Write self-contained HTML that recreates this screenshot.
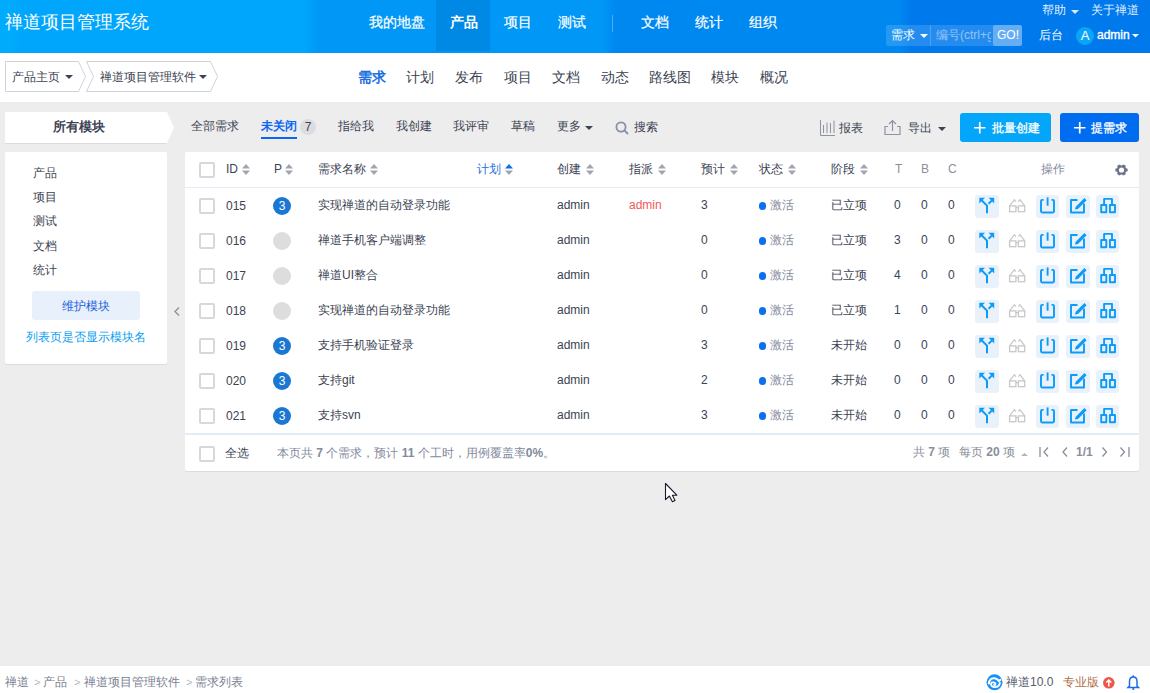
<!DOCTYPE html>
<html><head><meta charset="utf-8">
<style>
*{box-sizing:border-box;margin:0;padding:0}
html,body{width:1150px;height:693px;overflow:hidden}
body{background:#ededed;font-family:"Liberation Sans",sans-serif;font-size:12px;color:#3c4353;position:relative}
.a{position:absolute;white-space:nowrap}
svg{position:absolute;overflow:visible}
#hd{position:absolute;left:0;top:0;width:1150px;height:53px;background:linear-gradient(to right,#00abfc 0px,#00abfc 9px,#00a6fb 21px,#00a6fb 305px,#0097f6 318px,#0097f6 603px,#0088f1 615px,#0088f1 899px,#0079ed 912px,#0079ed 1150px)}
.w{color:#fff}
.cb{position:absolute;width:16px;height:16px;border:2px solid #d7d8db;border-radius:2px;background:#fff}
.pri{position:absolute;width:18px;height:18px;border-radius:50%;background:#1a78d2;color:#fff;text-align:center;line-height:18px;font-size:12px}
.pri.e{background:#dddddd}
.dot{position:absolute;width:7px;height:8px;border-radius:3.5px;background:#0b6ff0}
.ib{position:absolute;width:24px;height:23px;border-radius:3px;background:#e9f2fb}
</style></head><body>

<div id="hd"></div>
<div class="a" style="left:5px;top:11px;line-height:22px;font-size:18px;color:#fff">禅道项目管理系统</div>
<div class="a" style="left:436px;top:0;width:54px;height:51px;background:#0089e4"></div>
<div class="a" style="left:369px;top:14px;line-height:16px;font-size:14px;color:#fff;-webkit-text-stroke:0.2px #fff">我的地盘</div>
<div class="a" style="left:450px;top:14px;line-height:16px;font-size:14px;color:#fff;font-weight:bold">产品</div>
<div class="a" style="left:504px;top:14px;line-height:16px;font-size:14px;color:#fff;-webkit-text-stroke:0.2px #fff">项目</div>
<div class="a" style="left:558px;top:14px;line-height:16px;font-size:14px;color:#fff;-webkit-text-stroke:0.2px #fff">测试</div>
<div class="a" style="left:641px;top:14px;line-height:16px;font-size:14px;color:#fff;-webkit-text-stroke:0.2px #fff">文档</div>
<div class="a" style="left:695px;top:14px;line-height:16px;font-size:14px;color:#fff;-webkit-text-stroke:0.2px #fff">统计</div>
<div class="a" style="left:749px;top:14px;line-height:16px;font-size:14px;color:#fff;-webkit-text-stroke:0.2px #fff">组织</div>
<div class="a" style="left:612px;top:15px;width:1px;height:17px;background:rgba(255,255,255,0.3)"></div>
<div class="a" style="left:1042px;top:3px;line-height:14px;color:rgba(255,255,255,0.9)">帮助</div>
<svg style="left:1071px;top:10px" width="8" height="4"><path d="M0 0H8L4 4Z" fill="rgba(255,255,255,0.85)"/></svg>
<div class="a" style="left:1091px;top:3px;line-height:14px;color:rgba(255,255,255,0.9)">关于禅道</div>
<div class="a" style="left:886px;top:25px;width:136px;height:21px;background:rgba(255,255,255,0.14);border-radius:2px"></div>
<div class="a" style="left:891px;top:28px;line-height:14px;color:#fff">需求</div>
<svg style="left:920px;top:34px" width="8" height="4"><path d="M0 0H8L4 4Z" fill="#fff"/></svg>
<div class="a" style="left:930px;top:25px;width:1px;height:21px;background:rgba(255,255,255,0.2)"></div>
<div class="a" style="left:936px;top:28px;line-height:14px;color:rgba(255,255,255,0.5);width:55px;overflow:hidden">编号(ctrl+g)</div>
<div class="a" style="left:993px;top:25px;width:29px;height:21px;background:rgba(255,255,255,0.3);border-radius:2px"></div>
<div class="a" style="left:997px;top:28px;line-height:14px;color:#fff;font-size:12px">GO!</div>
<div class="a" style="left:1039px;top:28px;line-height:14px;color:#fff">后台</div>
<div class="a" style="left:1076px;top:27px;width:18px;height:18px;border-radius:50%;background:#0aa5f8;color:#fff;font-size:13px;line-height:18px;text-align:center">A</div>
<div class="a" style="left:1097px;top:28px;line-height:14px;color:#fff;-webkit-text-stroke:0.35px #fff">admin</div>
<svg style="left:1132px;top:34px" width="7" height="4"><path d="M0 0H7L3.5 3.5Z" fill="#fff"/></svg>
<div class="a" style="left:0;top:53px;width:1150px;height:49px;background:#fff"></div>
<svg style="left:0;top:0" width="1150" height="100"><path d="M5.5 61.5H78.5L85.5 76.5L78.5 91.5H5.5Z" fill="#fff" stroke="#cdd2dc"/><path d="M86.5 61.5H210.5L217.5 76.5L210.5 91.5H86.5L93.5 76.5Z" fill="#fff" stroke="#cdd2dc"/><path d="M65 75H73L69 79Z" fill="#3c4353"/><path d="M199 75H207L203 79Z" fill="#3c4353"/></svg>
<div class="a" style="left:12px;top:69px;line-height:16px;">产品主页</div>
<div class="a" style="left:100px;top:69px;line-height:16px;">禅道项目管理软件</div>
<div class="a" style="left:358px;top:69px;line-height:16px;font-size:14px;font-weight:bold;color:#1b6fe0">需求</div>
<div class="a" style="left:406px;top:69px;line-height:16px;font-size:14px">计划</div>
<div class="a" style="left:455px;top:69px;line-height:16px;font-size:14px">发布</div>
<div class="a" style="left:504px;top:69px;line-height:16px;font-size:14px">项目</div>
<div class="a" style="left:552px;top:69px;line-height:16px;font-size:14px">文档</div>
<div class="a" style="left:601px;top:69px;line-height:16px;font-size:14px">动态</div>
<div class="a" style="left:649px;top:69px;line-height:16px;font-size:14px">路线图</div>
<div class="a" style="left:711px;top:69px;line-height:16px;font-size:14px">模块</div>
<div class="a" style="left:760px;top:69px;line-height:16px;font-size:14px">概况</div>
<svg style="left:0;top:0" width="200" height="400"><path d="M5 112H167L174 127.5L167 143H5Z" fill="#fff"/><path d="M5 143.5H166" stroke="#dcdcdc" stroke-width="1"/></svg>
<div class="a" style="left:53px;top:119px;line-height:16px;font-weight:bold;font-size:12.5px">所有模块</div>
<div class="a" style="left:5px;top:152px;width:162px;height:212px;background:#fff;border-radius:2px;box-shadow:0 1px 0 #dcdcdc"></div>
<div class="a" style="left:33px;top:165px;line-height:16px;">产品</div>
<div class="a" style="left:33px;top:189px;line-height:16px;">项目</div>
<div class="a" style="left:33px;top:213px;line-height:16px;">测试</div>
<div class="a" style="left:33px;top:238px;line-height:16px;">文档</div>
<div class="a" style="left:33px;top:262px;line-height:16px;">统计</div>
<div class="a" style="left:32px;top:291px;width:108px;height:29px;background:#e8f1fb;border-radius:3px"></div>
<div class="a" style="left:62px;top:298px;line-height:16px;color:#1a5fe0">维护模块</div>
<div class="a" style="left:26px;top:329px;line-height:16px;color:#0aa0ef">列表页是否显示模块名</div>
<svg style="left:174px;top:307px" width="6" height="9"><path d="M5 0.5L1 4.5L5 8.5" fill="none" stroke="#8a8f99" stroke-width="1.3"/></svg>
<div class="a" style="left:191px;top:118px;line-height:16px;">全部需求</div>
<div class="a" style="left:261px;top:118px;line-height:16px;color:#0b66f5;font-weight:bold">未关闭</div>
<div class="a" style="left:261px;top:137px;width:36px;height:2px;background:#0b66f5"></div>
<div class="a" style="left:300px;top:119px;width:16px;height:16px;border-radius:50%;background:#dcdde0;text-align:center;line-height:16px;color:#3c4353">7</div>
<div class="a" style="left:338px;top:118px;line-height:16px;">指给我</div>
<div class="a" style="left:396px;top:118px;line-height:16px;">我创建</div>
<div class="a" style="left:453px;top:118px;line-height:16px;">我评审</div>
<div class="a" style="left:511px;top:118px;line-height:16px;">草稿</div>
<div class="a" style="left:557px;top:118px;line-height:16px;">更多</div>
<svg style="left:585px;top:126px" width="8" height="4"><path d="M0 0H8L4 4Z" fill="#3c4353"/></svg>
<svg style="left:615px;top:121px" width="16" height="16"><circle cx="6" cy="6" r="4.6" fill="none" stroke="#8590a6" stroke-width="1.8"/><path d="M9.4 9.4L13 13" stroke="#8590a6" stroke-width="1.8"/></svg>
<div class="a" style="left:634px;top:119px;line-height:16px;">搜索</div>
<svg style="left:819px;top:120px" width="18" height="17"><g fill="none" stroke="#8d93a3" stroke-width="1"><path d="M1.5 0V15.5H16"/><path d="M4.5 5V13M8 2.5V13M11.5 3V13M15 0.5V13"/></g></svg>
<div class="a" style="left:839px;top:120px;line-height:16px;">报表</div>
<svg style="left:884px;top:119px" width="18" height="18"><g fill="none" stroke="#8d93a3" stroke-width="1.2"><path d="M4 7.5H1V15.5H16V7.5H13"/><path d="M8.5 12V1.5M5 5L8.5 1.5L12 5"/></g></svg>
<div class="a" style="left:908px;top:120px;line-height:16px;">导出</div>
<svg style="left:938px;top:127px" width="8" height="4"><path d="M0 0H8L4 4Z" fill="#3c4353"/></svg>
<div class="a" style="left:960px;top:113px;width:91px;height:29px;background:#03a6f8;border-radius:3px"></div>
<svg style="left:974px;top:122px" width="12" height="12"><path d="M5.75 0V11.5M0 5.75H11.5" stroke="#fff" stroke-width="1.7"/></svg>
<div class="a" style="left:992px;top:120px;line-height:16px;color:#fff;-webkit-text-stroke:0.3px #fff">批量创建</div>
<div class="a" style="left:1060px;top:113px;width:79px;height:29px;background:#006cf0;border-radius:3px"></div>
<svg style="left:1074px;top:122px" width="12" height="12"><path d="M5.75 0V11.5M0 5.75H11.5" stroke="#fff" stroke-width="1.7"/></svg>
<div class="a" style="left:1091px;top:120px;line-height:16px;color:#fff;-webkit-text-stroke:0.3px #fff">提需求</div>
<div class="a" style="left:185px;top:152px;width:954px;height:319px;background:#fff;border-radius:2px;box-shadow:0 1px 0 #dcdcdc"></div>
<div class="cb" style="left:199px;top:162px"></div>
<div class="a" style="left:226px;top:161px;line-height:16px;">ID</div>
<svg style="left:242px;top:164px" width="8" height="11"><path d="M0 4.5L4 0L8 4.5Z" fill="#a0a5b0"/><path d="M0 6.5H8L4 11Z" fill="#a0a5b0"/></svg>
<div class="a" style="left:274px;top:161px;line-height:16px;">P</div>
<svg style="left:285px;top:164px" width="8" height="11"><path d="M0 4.5L4 0L8 4.5Z" fill="#a0a5b0"/><path d="M0 6.5H8L4 11Z" fill="#a0a5b0"/></svg>
<div class="a" style="left:318px;top:161px;line-height:16px;">需求名称</div>
<svg style="left:370px;top:164px" width="8" height="11"><path d="M0 4.5L4 0L8 4.5Z" fill="#a0a5b0"/><path d="M0 6.5H8L4 11Z" fill="#a0a5b0"/></svg>
<div class="a" style="left:477px;top:161px;line-height:16px;color:#1b6fe0">计划</div>
<svg style="left:505px;top:164px" width="8" height="11"><path d="M0 4.5L4 0L8 4.5Z" fill="#0b6ff0"/><path d="M0 6.5H8L4 11Z" fill="#a0a5b0"/></svg>
<div class="a" style="left:557px;top:161px;line-height:16px;">创建</div>
<svg style="left:586px;top:164px" width="8" height="11"><path d="M0 4.5L4 0L8 4.5Z" fill="#a0a5b0"/><path d="M0 6.5H8L4 11Z" fill="#a0a5b0"/></svg>
<div class="a" style="left:629px;top:161px;line-height:16px;">指派</div>
<svg style="left:658px;top:164px" width="8" height="11"><path d="M0 4.5L4 0L8 4.5Z" fill="#a0a5b0"/><path d="M0 6.5H8L4 11Z" fill="#a0a5b0"/></svg>
<div class="a" style="left:701px;top:161px;line-height:16px;">预计</div>
<svg style="left:730px;top:164px" width="8" height="11"><path d="M0 4.5L4 0L8 4.5Z" fill="#a0a5b0"/><path d="M0 6.5H8L4 11Z" fill="#a0a5b0"/></svg>
<div class="a" style="left:759px;top:161px;line-height:16px;">状态</div>
<svg style="left:788px;top:164px" width="8" height="11"><path d="M0 4.5L4 0L8 4.5Z" fill="#a0a5b0"/><path d="M0 6.5H8L4 11Z" fill="#a0a5b0"/></svg>
<div class="a" style="left:831px;top:161px;line-height:16px;">阶段</div>
<svg style="left:860px;top:164px" width="8" height="11"><path d="M0 4.5L4 0L8 4.5Z" fill="#a0a5b0"/><path d="M0 6.5H8L4 11Z" fill="#a0a5b0"/></svg>
<div class="a" style="left:895px;top:161px;line-height:16px;color:#8b909b">T</div>
<div class="a" style="left:921px;top:161px;line-height:16px;color:#8b909b">B</div>
<div class="a" style="left:948px;top:161px;line-height:16px;color:#8b909b">C</div>
<div class="a" style="left:1041px;top:161px;line-height:16px;color:#838a9d">操作</div>
<svg style="left:1115px;top:164px" width="14" height="13"><path d="M10.98 4.21L12.64 4.72L12.64 7.28L10.98 7.79L10.46 8.59L10.80 10.15L8.34 11.42L7.01 10.39L5.99 10.39L4.66 11.42L2.20 10.15L2.54 8.59L2.02 7.79L0.36 7.28L0.36 4.72L2.02 4.21L2.54 3.41L2.20 1.85L4.66 0.58L5.99 1.61L7.01 1.61L8.34 0.58L10.80 1.85L10.46 3.41Z" fill="#6c7386"/><circle cx="6.5" cy="6" r="2.6" fill="#fff"/></svg>
<div class="a" style="left:185px;top:187px;width:954px;height:1px;background:#e3edf8"></div>
<div class="cb" style="left:199px;top:198px"></div>
<div class="a" style="left:226px;top:198px;line-height:16px;">015</div>
<div class="pri" style="left:273px;top:197px">3</div>
<div class="a" style="left:318px;top:197px;line-height:16px;">实现禅道的自动登录功能</div>
<div class="a" style="left:557px;top:197px;line-height:16px;">admin</div>
<div class="a" style="left:629px;top:197px;line-height:16px;color:#f1575b">admin</div>
<div class="a" style="left:701px;top:197px;line-height:16px;">3</div>
<div class="dot" style="left:759px;top:202px"></div>
<div class="a" style="left:770px;top:197px;line-height:16px;color:#838a9d">激活</div>
<div class="a" style="left:831px;top:197px;line-height:16px;">已立项</div>
<div class="a" style="left:894px;top:197px;line-height:16px;">0</div>
<div class="a" style="left:921px;top:197px;line-height:16px;">0</div>
<div class="a" style="left:948px;top:197px;line-height:16px;">0</div>
<div class="ib" style="left:975px;top:195px;width:24px"></div>
<div class="ib" style="left:1036px;top:195px;width:23px"></div>
<div class="ib" style="left:1066px;top:195px;width:24px"></div>
<div class="ib" style="left:1096px;top:195px;width:23px"></div>
<svg style="left:975px;top:195px" width="24" height="23"><g stroke="#0d9bf7" stroke-width="2" fill="none" stroke-linecap="butt"><path d="M12 18.2V10.6L6.6 5.2"/><path d="M13.6 8.8L17 5.4"/></g><path d="M4.3 2.7H10L4.3 8.4Z" fill="#0d9bf7"/><path d="M19.2 2.7H13.5L19.2 8.4Z" fill="#0d9bf7"/></svg>
<svg style="left:1005px;top:195px" width="24" height="23"><g stroke="#c8c8c8" stroke-width="1.3" fill="none"><rect x="4.6" y="10.9" width="6.3" height="5.8" /><rect x="13.4" y="10.9" width="6.3" height="5.8"/><path d="M10.9 12.6H13.4"/><path d="M4.6 10.9L9.3 4.7L10.9 6.7M19.7 10.9L15 4.7L13.4 6.7"/></g></svg>
<svg style="left:1036px;top:195px" width="23" height="23"><g stroke="#0d9bf7" stroke-width="1.9" fill="none" stroke-linejoin="round"><path d="M7.6 4.9H6.2Q5 4.9 5 6.1V16.3Q5 17.5 6.2 17.5H16.8Q18 17.5 18 16.3V6.1Q18 4.9 16.8 4.9H15.5"/><path d="M11.6 2.4V10.7"/></g></svg>
<svg style="left:1066px;top:195px" width="24" height="23"><g stroke="#0d9bf7" stroke-width="1.9" fill="none" stroke-linejoin="round"><path d="M11.5 5H5V17.5H18V8.6"/></g><path d="M8.8 14.6L9.8 11.8L18.4 3.1L20.6 5.3L12 13.9Z" fill="#0d9bf7"/></svg>
<svg style="left:1096px;top:195px" width="24" height="23"><g stroke="#0d9bf7" stroke-width="1.9" fill="none" stroke-linejoin="round"><path d="M8.1 10V3.9H16V10"/><rect x="5.2" y="10" width="5.1" height="7.2"/><rect x="13.9" y="10" width="5.1" height="7.2"/></g></svg>
<div class="cb" style="left:199px;top:233px"></div>
<div class="a" style="left:226px;top:233px;line-height:16px;">016</div>
<div class="pri e" style="left:273px;top:232px"></div>
<div class="a" style="left:318px;top:232px;line-height:16px;">禅道手机客户端调整</div>
<div class="a" style="left:557px;top:232px;line-height:16px;">admin</div>
<div class="a" style="left:701px;top:232px;line-height:16px;">0</div>
<div class="dot" style="left:759px;top:237px"></div>
<div class="a" style="left:770px;top:232px;line-height:16px;color:#838a9d">激活</div>
<div class="a" style="left:831px;top:232px;line-height:16px;">已立项</div>
<div class="a" style="left:894px;top:232px;line-height:16px;">3</div>
<div class="a" style="left:921px;top:232px;line-height:16px;">0</div>
<div class="a" style="left:948px;top:232px;line-height:16px;">0</div>
<div class="ib" style="left:975px;top:230px;width:24px"></div>
<div class="ib" style="left:1036px;top:230px;width:23px"></div>
<div class="ib" style="left:1066px;top:230px;width:24px"></div>
<div class="ib" style="left:1096px;top:230px;width:23px"></div>
<svg style="left:975px;top:230px" width="24" height="23"><g stroke="#0d9bf7" stroke-width="2" fill="none" stroke-linecap="butt"><path d="M12 18.2V10.6L6.6 5.2"/><path d="M13.6 8.8L17 5.4"/></g><path d="M4.3 2.7H10L4.3 8.4Z" fill="#0d9bf7"/><path d="M19.2 2.7H13.5L19.2 8.4Z" fill="#0d9bf7"/></svg>
<svg style="left:1005px;top:230px" width="24" height="23"><g stroke="#c8c8c8" stroke-width="1.3" fill="none"><rect x="4.6" y="10.9" width="6.3" height="5.8" /><rect x="13.4" y="10.9" width="6.3" height="5.8"/><path d="M10.9 12.6H13.4"/><path d="M4.6 10.9L9.3 4.7L10.9 6.7M19.7 10.9L15 4.7L13.4 6.7"/></g></svg>
<svg style="left:1036px;top:230px" width="23" height="23"><g stroke="#0d9bf7" stroke-width="1.9" fill="none" stroke-linejoin="round"><path d="M7.6 4.9H6.2Q5 4.9 5 6.1V16.3Q5 17.5 6.2 17.5H16.8Q18 17.5 18 16.3V6.1Q18 4.9 16.8 4.9H15.5"/><path d="M11.6 2.4V10.7"/></g></svg>
<svg style="left:1066px;top:230px" width="24" height="23"><g stroke="#0d9bf7" stroke-width="1.9" fill="none" stroke-linejoin="round"><path d="M11.5 5H5V17.5H18V8.6"/></g><path d="M8.8 14.6L9.8 11.8L18.4 3.1L20.6 5.3L12 13.9Z" fill="#0d9bf7"/></svg>
<svg style="left:1096px;top:230px" width="24" height="23"><g stroke="#0d9bf7" stroke-width="1.9" fill="none" stroke-linejoin="round"><path d="M8.1 10V3.9H16V10"/><rect x="5.2" y="10" width="5.1" height="7.2"/><rect x="13.9" y="10" width="5.1" height="7.2"/></g></svg>
<div class="cb" style="left:199px;top:268px"></div>
<div class="a" style="left:226px;top:268px;line-height:16px;">017</div>
<div class="pri e" style="left:273px;top:267px"></div>
<div class="a" style="left:318px;top:267px;line-height:16px;">禅道UI整合</div>
<div class="a" style="left:557px;top:267px;line-height:16px;">admin</div>
<div class="a" style="left:701px;top:267px;line-height:16px;">0</div>
<div class="dot" style="left:759px;top:272px"></div>
<div class="a" style="left:770px;top:267px;line-height:16px;color:#838a9d">激活</div>
<div class="a" style="left:831px;top:267px;line-height:16px;">已立项</div>
<div class="a" style="left:894px;top:267px;line-height:16px;">4</div>
<div class="a" style="left:921px;top:267px;line-height:16px;">0</div>
<div class="a" style="left:948px;top:267px;line-height:16px;">0</div>
<div class="ib" style="left:975px;top:265px;width:24px"></div>
<div class="ib" style="left:1036px;top:265px;width:23px"></div>
<div class="ib" style="left:1066px;top:265px;width:24px"></div>
<div class="ib" style="left:1096px;top:265px;width:23px"></div>
<svg style="left:975px;top:265px" width="24" height="23"><g stroke="#0d9bf7" stroke-width="2" fill="none" stroke-linecap="butt"><path d="M12 18.2V10.6L6.6 5.2"/><path d="M13.6 8.8L17 5.4"/></g><path d="M4.3 2.7H10L4.3 8.4Z" fill="#0d9bf7"/><path d="M19.2 2.7H13.5L19.2 8.4Z" fill="#0d9bf7"/></svg>
<svg style="left:1005px;top:265px" width="24" height="23"><g stroke="#c8c8c8" stroke-width="1.3" fill="none"><rect x="4.6" y="10.9" width="6.3" height="5.8" /><rect x="13.4" y="10.9" width="6.3" height="5.8"/><path d="M10.9 12.6H13.4"/><path d="M4.6 10.9L9.3 4.7L10.9 6.7M19.7 10.9L15 4.7L13.4 6.7"/></g></svg>
<svg style="left:1036px;top:265px" width="23" height="23"><g stroke="#0d9bf7" stroke-width="1.9" fill="none" stroke-linejoin="round"><path d="M7.6 4.9H6.2Q5 4.9 5 6.1V16.3Q5 17.5 6.2 17.5H16.8Q18 17.5 18 16.3V6.1Q18 4.9 16.8 4.9H15.5"/><path d="M11.6 2.4V10.7"/></g></svg>
<svg style="left:1066px;top:265px" width="24" height="23"><g stroke="#0d9bf7" stroke-width="1.9" fill="none" stroke-linejoin="round"><path d="M11.5 5H5V17.5H18V8.6"/></g><path d="M8.8 14.6L9.8 11.8L18.4 3.1L20.6 5.3L12 13.9Z" fill="#0d9bf7"/></svg>
<svg style="left:1096px;top:265px" width="24" height="23"><g stroke="#0d9bf7" stroke-width="1.9" fill="none" stroke-linejoin="round"><path d="M8.1 10V3.9H16V10"/><rect x="5.2" y="10" width="5.1" height="7.2"/><rect x="13.9" y="10" width="5.1" height="7.2"/></g></svg>
<div class="cb" style="left:199px;top:303px"></div>
<div class="a" style="left:226px;top:303px;line-height:16px;">018</div>
<div class="pri e" style="left:273px;top:302px"></div>
<div class="a" style="left:318px;top:302px;line-height:16px;">实现禅道的自动登录功能</div>
<div class="a" style="left:557px;top:302px;line-height:16px;">admin</div>
<div class="a" style="left:701px;top:302px;line-height:16px;">0</div>
<div class="dot" style="left:759px;top:307px"></div>
<div class="a" style="left:770px;top:302px;line-height:16px;color:#838a9d">激活</div>
<div class="a" style="left:831px;top:302px;line-height:16px;">已立项</div>
<div class="a" style="left:894px;top:302px;line-height:16px;">1</div>
<div class="a" style="left:921px;top:302px;line-height:16px;">0</div>
<div class="a" style="left:948px;top:302px;line-height:16px;">0</div>
<div class="ib" style="left:975px;top:300px;width:24px"></div>
<div class="ib" style="left:1036px;top:300px;width:23px"></div>
<div class="ib" style="left:1066px;top:300px;width:24px"></div>
<div class="ib" style="left:1096px;top:300px;width:23px"></div>
<svg style="left:975px;top:300px" width="24" height="23"><g stroke="#0d9bf7" stroke-width="2" fill="none" stroke-linecap="butt"><path d="M12 18.2V10.6L6.6 5.2"/><path d="M13.6 8.8L17 5.4"/></g><path d="M4.3 2.7H10L4.3 8.4Z" fill="#0d9bf7"/><path d="M19.2 2.7H13.5L19.2 8.4Z" fill="#0d9bf7"/></svg>
<svg style="left:1005px;top:300px" width="24" height="23"><g stroke="#c8c8c8" stroke-width="1.3" fill="none"><rect x="4.6" y="10.9" width="6.3" height="5.8" /><rect x="13.4" y="10.9" width="6.3" height="5.8"/><path d="M10.9 12.6H13.4"/><path d="M4.6 10.9L9.3 4.7L10.9 6.7M19.7 10.9L15 4.7L13.4 6.7"/></g></svg>
<svg style="left:1036px;top:300px" width="23" height="23"><g stroke="#0d9bf7" stroke-width="1.9" fill="none" stroke-linejoin="round"><path d="M7.6 4.9H6.2Q5 4.9 5 6.1V16.3Q5 17.5 6.2 17.5H16.8Q18 17.5 18 16.3V6.1Q18 4.9 16.8 4.9H15.5"/><path d="M11.6 2.4V10.7"/></g></svg>
<svg style="left:1066px;top:300px" width="24" height="23"><g stroke="#0d9bf7" stroke-width="1.9" fill="none" stroke-linejoin="round"><path d="M11.5 5H5V17.5H18V8.6"/></g><path d="M8.8 14.6L9.8 11.8L18.4 3.1L20.6 5.3L12 13.9Z" fill="#0d9bf7"/></svg>
<svg style="left:1096px;top:300px" width="24" height="23"><g stroke="#0d9bf7" stroke-width="1.9" fill="none" stroke-linejoin="round"><path d="M8.1 10V3.9H16V10"/><rect x="5.2" y="10" width="5.1" height="7.2"/><rect x="13.9" y="10" width="5.1" height="7.2"/></g></svg>
<div class="cb" style="left:199px;top:338px"></div>
<div class="a" style="left:226px;top:338px;line-height:16px;">019</div>
<div class="pri" style="left:273px;top:337px">3</div>
<div class="a" style="left:318px;top:337px;line-height:16px;">支持手机验证登录</div>
<div class="a" style="left:557px;top:337px;line-height:16px;">admin</div>
<div class="a" style="left:701px;top:337px;line-height:16px;">3</div>
<div class="dot" style="left:759px;top:342px"></div>
<div class="a" style="left:770px;top:337px;line-height:16px;color:#838a9d">激活</div>
<div class="a" style="left:831px;top:337px;line-height:16px;">未开始</div>
<div class="a" style="left:894px;top:337px;line-height:16px;">0</div>
<div class="a" style="left:921px;top:337px;line-height:16px;">0</div>
<div class="a" style="left:948px;top:337px;line-height:16px;">0</div>
<div class="ib" style="left:975px;top:335px;width:24px"></div>
<div class="ib" style="left:1036px;top:335px;width:23px"></div>
<div class="ib" style="left:1066px;top:335px;width:24px"></div>
<div class="ib" style="left:1096px;top:335px;width:23px"></div>
<svg style="left:975px;top:335px" width="24" height="23"><g stroke="#0d9bf7" stroke-width="2" fill="none" stroke-linecap="butt"><path d="M12 18.2V10.6L6.6 5.2"/><path d="M13.6 8.8L17 5.4"/></g><path d="M4.3 2.7H10L4.3 8.4Z" fill="#0d9bf7"/><path d="M19.2 2.7H13.5L19.2 8.4Z" fill="#0d9bf7"/></svg>
<svg style="left:1005px;top:335px" width="24" height="23"><g stroke="#c8c8c8" stroke-width="1.3" fill="none"><rect x="4.6" y="10.9" width="6.3" height="5.8" /><rect x="13.4" y="10.9" width="6.3" height="5.8"/><path d="M10.9 12.6H13.4"/><path d="M4.6 10.9L9.3 4.7L10.9 6.7M19.7 10.9L15 4.7L13.4 6.7"/></g></svg>
<svg style="left:1036px;top:335px" width="23" height="23"><g stroke="#0d9bf7" stroke-width="1.9" fill="none" stroke-linejoin="round"><path d="M7.6 4.9H6.2Q5 4.9 5 6.1V16.3Q5 17.5 6.2 17.5H16.8Q18 17.5 18 16.3V6.1Q18 4.9 16.8 4.9H15.5"/><path d="M11.6 2.4V10.7"/></g></svg>
<svg style="left:1066px;top:335px" width="24" height="23"><g stroke="#0d9bf7" stroke-width="1.9" fill="none" stroke-linejoin="round"><path d="M11.5 5H5V17.5H18V8.6"/></g><path d="M8.8 14.6L9.8 11.8L18.4 3.1L20.6 5.3L12 13.9Z" fill="#0d9bf7"/></svg>
<svg style="left:1096px;top:335px" width="24" height="23"><g stroke="#0d9bf7" stroke-width="1.9" fill="none" stroke-linejoin="round"><path d="M8.1 10V3.9H16V10"/><rect x="5.2" y="10" width="5.1" height="7.2"/><rect x="13.9" y="10" width="5.1" height="7.2"/></g></svg>
<div class="cb" style="left:199px;top:373px"></div>
<div class="a" style="left:226px;top:373px;line-height:16px;">020</div>
<div class="pri" style="left:273px;top:372px">3</div>
<div class="a" style="left:318px;top:372px;line-height:16px;">支持git</div>
<div class="a" style="left:557px;top:372px;line-height:16px;">admin</div>
<div class="a" style="left:701px;top:372px;line-height:16px;">2</div>
<div class="dot" style="left:759px;top:377px"></div>
<div class="a" style="left:770px;top:372px;line-height:16px;color:#838a9d">激活</div>
<div class="a" style="left:831px;top:372px;line-height:16px;">未开始</div>
<div class="a" style="left:894px;top:372px;line-height:16px;">0</div>
<div class="a" style="left:921px;top:372px;line-height:16px;">0</div>
<div class="a" style="left:948px;top:372px;line-height:16px;">0</div>
<div class="ib" style="left:975px;top:370px;width:24px"></div>
<div class="ib" style="left:1036px;top:370px;width:23px"></div>
<div class="ib" style="left:1066px;top:370px;width:24px"></div>
<div class="ib" style="left:1096px;top:370px;width:23px"></div>
<svg style="left:975px;top:370px" width="24" height="23"><g stroke="#0d9bf7" stroke-width="2" fill="none" stroke-linecap="butt"><path d="M12 18.2V10.6L6.6 5.2"/><path d="M13.6 8.8L17 5.4"/></g><path d="M4.3 2.7H10L4.3 8.4Z" fill="#0d9bf7"/><path d="M19.2 2.7H13.5L19.2 8.4Z" fill="#0d9bf7"/></svg>
<svg style="left:1005px;top:370px" width="24" height="23"><g stroke="#c8c8c8" stroke-width="1.3" fill="none"><rect x="4.6" y="10.9" width="6.3" height="5.8" /><rect x="13.4" y="10.9" width="6.3" height="5.8"/><path d="M10.9 12.6H13.4"/><path d="M4.6 10.9L9.3 4.7L10.9 6.7M19.7 10.9L15 4.7L13.4 6.7"/></g></svg>
<svg style="left:1036px;top:370px" width="23" height="23"><g stroke="#0d9bf7" stroke-width="1.9" fill="none" stroke-linejoin="round"><path d="M7.6 4.9H6.2Q5 4.9 5 6.1V16.3Q5 17.5 6.2 17.5H16.8Q18 17.5 18 16.3V6.1Q18 4.9 16.8 4.9H15.5"/><path d="M11.6 2.4V10.7"/></g></svg>
<svg style="left:1066px;top:370px" width="24" height="23"><g stroke="#0d9bf7" stroke-width="1.9" fill="none" stroke-linejoin="round"><path d="M11.5 5H5V17.5H18V8.6"/></g><path d="M8.8 14.6L9.8 11.8L18.4 3.1L20.6 5.3L12 13.9Z" fill="#0d9bf7"/></svg>
<svg style="left:1096px;top:370px" width="24" height="23"><g stroke="#0d9bf7" stroke-width="1.9" fill="none" stroke-linejoin="round"><path d="M8.1 10V3.9H16V10"/><rect x="5.2" y="10" width="5.1" height="7.2"/><rect x="13.9" y="10" width="5.1" height="7.2"/></g></svg>
<div class="cb" style="left:199px;top:408px"></div>
<div class="a" style="left:226px;top:408px;line-height:16px;">021</div>
<div class="pri" style="left:273px;top:407px">3</div>
<div class="a" style="left:318px;top:407px;line-height:16px;">支持svn</div>
<div class="a" style="left:557px;top:407px;line-height:16px;">admin</div>
<div class="a" style="left:701px;top:407px;line-height:16px;">3</div>
<div class="dot" style="left:759px;top:412px"></div>
<div class="a" style="left:770px;top:407px;line-height:16px;color:#838a9d">激活</div>
<div class="a" style="left:831px;top:407px;line-height:16px;">未开始</div>
<div class="a" style="left:894px;top:407px;line-height:16px;">0</div>
<div class="a" style="left:921px;top:407px;line-height:16px;">0</div>
<div class="a" style="left:948px;top:407px;line-height:16px;">0</div>
<div class="ib" style="left:975px;top:405px;width:24px"></div>
<div class="ib" style="left:1036px;top:405px;width:23px"></div>
<div class="ib" style="left:1066px;top:405px;width:24px"></div>
<div class="ib" style="left:1096px;top:405px;width:23px"></div>
<svg style="left:975px;top:405px" width="24" height="23"><g stroke="#0d9bf7" stroke-width="2" fill="none" stroke-linecap="butt"><path d="M12 18.2V10.6L6.6 5.2"/><path d="M13.6 8.8L17 5.4"/></g><path d="M4.3 2.7H10L4.3 8.4Z" fill="#0d9bf7"/><path d="M19.2 2.7H13.5L19.2 8.4Z" fill="#0d9bf7"/></svg>
<svg style="left:1005px;top:405px" width="24" height="23"><g stroke="#c8c8c8" stroke-width="1.3" fill="none"><rect x="4.6" y="10.9" width="6.3" height="5.8" /><rect x="13.4" y="10.9" width="6.3" height="5.8"/><path d="M10.9 12.6H13.4"/><path d="M4.6 10.9L9.3 4.7L10.9 6.7M19.7 10.9L15 4.7L13.4 6.7"/></g></svg>
<svg style="left:1036px;top:405px" width="23" height="23"><g stroke="#0d9bf7" stroke-width="1.9" fill="none" stroke-linejoin="round"><path d="M7.6 4.9H6.2Q5 4.9 5 6.1V16.3Q5 17.5 6.2 17.5H16.8Q18 17.5 18 16.3V6.1Q18 4.9 16.8 4.9H15.5"/><path d="M11.6 2.4V10.7"/></g></svg>
<svg style="left:1066px;top:405px" width="24" height="23"><g stroke="#0d9bf7" stroke-width="1.9" fill="none" stroke-linejoin="round"><path d="M11.5 5H5V17.5H18V8.6"/></g><path d="M8.8 14.6L9.8 11.8L18.4 3.1L20.6 5.3L12 13.9Z" fill="#0d9bf7"/></svg>
<svg style="left:1096px;top:405px" width="24" height="23"><g stroke="#0d9bf7" stroke-width="1.9" fill="none" stroke-linejoin="round"><path d="M8.1 10V3.9H16V10"/><rect x="5.2" y="10" width="5.1" height="7.2"/><rect x="13.9" y="10" width="5.1" height="7.2"/></g></svg>
<div class="a" style="left:185px;top:433px;width:954px;height:2px;background:#e3edf8"></div>
<div class="cb" style="left:199px;top:446px"></div>
<div class="a" style="left:225px;top:445px;line-height:16px;">全选</div>
<div class="a" style="left:277px;top:445px;line-height:16px;color:#838a9d">本页共 <b>7</b> 个需求，预计 <b>11</b> 个工时，用例覆盖率<b>0%</b>。</div>
<div class="a" style="left:913px;top:444px;line-height:16px;color:#8a8f9a">共 <b>7</b> 项</div>
<div class="a" style="left:959px;top:444px;line-height:16px;color:#8a8f9a">每页 <b>20</b> 项</div>
<svg style="left:1021px;top:453px" width="7" height="3"><path d="M0 3H7L3.5 0Z" fill="#b0b4bc"/></svg>
<svg style="left:1039px;top:446px" width="12" height="12"><g stroke="#8a8f9a" stroke-width="1.3" fill="none"><path d="M1 1V11M9 1.5L5 6L9 10.5"/></g></svg>
<svg style="left:1061px;top:446px" width="8" height="12"><g stroke="#8a8f9a" stroke-width="1.3" fill="none"><path d="M6 1.5L2 6L6 10.5"/></g></svg>
<div class="a" style="left:1076px;top:444px;line-height:16px;color:#8a8f9a"><b>1/1</b></div>
<svg style="left:1101px;top:446px" width="8" height="12"><g stroke="#8a8f9a" stroke-width="1.3" fill="none"><path d="M1.5 1.5L5.5 6L1.5 10.5"/></g></svg>
<svg style="left:1119px;top:446px" width="12" height="12"><g stroke="#8a8f9a" stroke-width="1.3" fill="none"><path d="M1.5 1.5L5.5 6L1.5 10.5M10 1V11"/></g></svg>
<div class="a" style="left:0;top:665px;width:1150px;height:28px;background:#fff;border-top:1px solid #e4ecf5"></div>
<div class="a" style="left:5px;top:674px;line-height:16px;color:#7b8191">禅道</div>
<div class="a" style="left:34px;top:674px;line-height:16px;color:#b5b9c0;font-size:11px">&gt;</div>
<div class="a" style="left:43px;top:674px;line-height:16px;color:#7b8191">产品</div>
<div class="a" style="left:74px;top:674px;line-height:16px;color:#b5b9c0;font-size:11px">&gt;</div>
<div class="a" style="left:84px;top:674px;line-height:16px;color:#7b8191">禅道项目管理软件</div>
<div class="a" style="left:186px;top:674px;line-height:16px;color:#b5b9c0;font-size:11px">&gt;</div>
<div class="a" style="left:195px;top:674px;line-height:16px;color:#7b8191">需求列表</div>
<svg style="left:986px;top:674px" width="17" height="17"><circle cx="8.5" cy="8.3" r="8" fill="#1890f5"/><g fill="none" stroke="#fff" stroke-linecap="round"><path d="M2.8 9.5C3.2 6.5 5 4.3 7.5 4.2C9.8 4.1 11.6 5.3 12.8 7L14.4 5.8" stroke-width="2.1"/><path d="M13.9 9C13.5 11.6 11.8 13 9 13.1C6.4 13.2 5 11.8 5 10.1C5 8.7 6.3 8.2 7.6 8.3C9 8.5 9.7 9.5 9.4 10.4C9.2 11 8.6 11.2 8 11" stroke-width="1.8"/></g></svg>
<div class="a" style="left:1006px;top:674px;line-height:16px;color:#555d6e">禅道10.0</div>
<div class="a" style="left:1063px;top:674px;line-height:16px;color:#b0704a">专业版</div>
<svg style="left:1103px;top:677px" width="12" height="12"><circle cx="5.8" cy="5.8" r="5.8" fill="#f0554b"/><path d="M5.8 9.5V3M3.3 5.5L5.8 3L8.3 5.5" fill="none" stroke="#fff" stroke-width="1.5"/></svg>
<svg style="left:1127px;top:675px" width="13" height="15"><path d="M2.5 11V6.5C2.5 3.5 4 2 6.3 2C8.6 2 10 3.5 10 6.5V11L11.5 12.5H1L2.5 11Z" fill="none" stroke="#1a6fe8" stroke-width="1.5"/><circle cx="6.3" cy="1.3" r="1" fill="#1a6fe8"/><circle cx="6.3" cy="14" r="1.1" fill="#1a6fe8"/></svg>
<svg style="left:665px;top:483px" width="13" height="20"><path d="M0.5 0.5V16.6L4.4 13L7.4 18.8L10 17.5L7.4 12.2H11.8Z" fill="#fff" stroke="#151a2a" stroke-width="1.1" stroke-linejoin="round"/></svg>
</body></html>
